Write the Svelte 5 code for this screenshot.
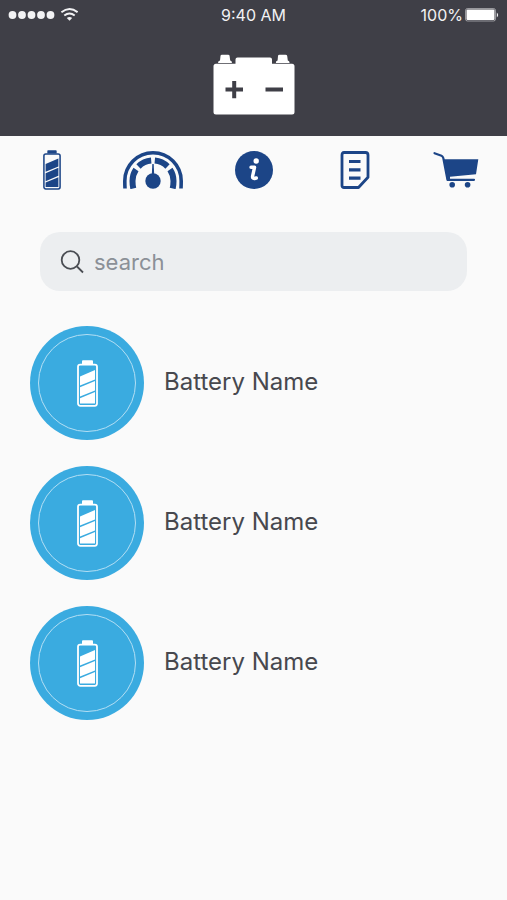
<script lang="ts">
	let query = '';

	const batteries = [
		{ id: 1, name: 'Battery Name' },
		{ id: 2, name: 'Battery Name' },
		{ id: 3, name: 'Battery Name' }
	];

	const links = [
		{ icon: 'battery', label: 'Batteries' },
		{ icon: 'gauge', label: 'Gauge' },
		{ icon: 'info', label: 'Info' },
		{ icon: 'notes', label: 'Notes' },
		{ icon: 'cart', label: 'Cart' }
	];
</script>

{#snippet battery(width: number, height: number)}
	<svg {width} {height} viewBox="0 0 21 47" fill="currentColor" aria-hidden="true">
		<path d="M5 4V1.2Q5 .2 6 .2H15Q16 .2 16 1.2V4Z" />
		<rect x="1" y="4.6" width="19" height="41.2" rx="2.2" fill="none" stroke="currentColor" stroke-width="1.8" />
		<path d="M3 16.4 18 10V19.4L3 25.6ZM3 27.2 18 21V30.4L3 36.6ZM3 38.2 18 32V43.6H3Z" />
	</svg>
{/snippet}

<div class="page">
	<header>
		<div class="status">
			<div class="signal">
				<svg width="70" height="16" viewBox="0 0 70 16" fill="currentColor" aria-hidden="true">
					{#each [4.5, 14, 23.5, 33, 42.5] as cx}
						<circle {cx} cy="8" r="3.9" />
					{/each}
					<g fill="none" stroke="currentColor" stroke-width="1.9">
						<path d="M53.4 5.2Q61.5 -1.4 69.6 5.2" />
						<path d="M56.3 8.6Q61.5 4.2 66.700 8.6" />
					</g>
					<path d="M58.8 11Q61.5 9 64.2 11L61.5 13.8Z" />
				</svg>
			</div>
			<span>9:40 AM</span>
			<div class="power">
				<span>100%</span>
				<svg width="34" height="14" viewBox="0 0 34 14" fill="currentColor" aria-hidden="true">
					<rect x=".5" y=".5" width="30" height="12.500" rx="2" fill="none" stroke="currentColor" opacity=".5" />
					<rect x="1.500" y="1.500" width="28" height="10.500" rx="1" fill="#fff" />
					<path d="M31.800 4.500Q34.500 7 31.800 9.500Z" />
				</svg>
			</div>
		</div>
		<svg class="logo" width="82" height="61" viewBox="0 0 82 61" fill="#fff" role="img" aria-label="Battery">
			<path d="M7.5 2Q7.5 .8 9 .8H15Q16.6 .8 16.6 2L17.2 6.4Q19 6.6 19 9H5Q5 6.6 7 6.4Z" />
			<path d="M65 2Q65 .8 66.5 .8H72.5Q74 .8 74.2 2L74.8 6.4Q76.6 6.6 76.6 9H62.8Q62.8 6.6 64.6 6.4Z" />
			<path d="M3 9.8H22.5V5.5Q22.5 3.5 24.5 3.5H57Q59 3.5 59 5.5V9.8H79Q81.5 9.8 81.5 12.3V58Q81.5 60.5 79 60.5H3Q.5 60.5 .5 58V12.3Q.5 9.8 3 9.8Z" />
			<path d="M12.5 35.5H30M21.2 27V44.3M52.5 35.5H70" stroke="#3f3f47" stroke-width="4" />
		</svg>
	</header>

	<nav>
		{#each links as link}
			<a href="#{link.icon}" aria-label={link.label}>
				{#if link.icon === 'battery'}
					{@render battery(18, 40)}
				{:else if link.icon === 'gauge'}
					<svg width="60" height="38" viewBox="0 0 60 38" fill="none" stroke="currentColor" aria-hidden="true">
						<path d="M2 37.5Q1.8 34 1.8 30A28.2 28.2 0 0 1 58.2 30Q58.200 34 58 37.5" stroke-width="3.6" />
						<g stroke-width="6">
							<path d="M10.3 37.5Q9.5 34 9.5 30A20.5 20.5 0 0 1 13 18.5" />
							<path d="M15.5 15.5A20.5 20.5 0 0 1 28.2 9.6" />
							<path d="M31.8 9.6A20.500 20.500 0 0 1 44.500 15.5" />
							<path d="M47 18.5A20.5 20.5 0 0 1 50.5 30Q50.5 34 49.7 37.5" />
						</g>
						<path d="M29.3 13H30.7L31.2 24H28.8Z" fill="currentColor" stroke="none" />
						<circle cx="30" cy="30" r="7.7" fill="currentColor" stroke="none" />
					</svg>
				{:else if link.icon === 'info'}
					<svg width="38" height="38" viewBox="0 0 38 38" fill="currentColor" aria-hidden="true">
						<circle cx="19" cy="19" r="19" />
						<circle cx="21.2" cy="10" r="2.7" fill="#fff" />
						<path d="M16 16.2H19.600L17.600 25.2Q17.200 27.700 19.500 27.500L21.300 27" fill="none" stroke="#fff" stroke-width="3.4" stroke-linecap="round" stroke-linejoin="round" />
					</svg>
				{:else if link.icon === 'notes'}
					<svg width="30" height="38" viewBox="0 0 30 38" fill="none" stroke="currentColor" stroke-width="2.8" aria-hidden="true">
						<path d="M4 1.5H25.5Q28 1.5 28 4V26.3L18.5 36.5H4Q2 36.5 2 34.5V4Q2 1.5 4 1.5Z" stroke-linejoin="round" />
						<path d="M9 10.500H20.500M9 18.800H20.500M9 27.200H20.500" stroke-width="3.2" />
					</svg>
				{:else}
					<svg width="46" height="38" viewBox="0 0 46 38" fill="currentColor" aria-hidden="true">
						<path d="M1.5 2.2 8.5 4.7Q9.8 5.300 10.3 7L14.5 28.800H41" fill="none" stroke="currentColor" stroke-width="2.2" stroke-linecap="round" stroke-linejoin="round" />
						<path d="M10.5 8.3H45.3L43 23.300 17 25.7V29H14Z" />
						<circle cx="19.2" cy="33.8" r="2.8" />
						<circle cx="34.6" cy="33.8" r="2.8" />
					</svg>
				{/if}
			</a>
		{/each}
	</nav>

	<main>
		<label class="search">
			<svg width="24" height="24" viewBox="0 0 24 24" fill="none" stroke="#4a4d53" stroke-width="1.8" aria-hidden="true">
				<circle cx="10.5" cy="10" r="8.8" />
				<path d="M17 16.5 23 22.5" />
			</svg>
			<input type="text" placeholder="search" aria-label="search" bind:value={query} />
		</label>

		<ul>
			{#each batteries as item (item.id)}
				<li>
					<span class="badge">
						<span class="ring">{@render battery(21, 47)}</span>
					</span>
					<span class="name">{item.name}</span>
				</li>
			{/each}
		</ul>
	</main>
</div>

<style>
	:global(body) {
		margin: 0;
		background: #fafafa;
	}

	.page {
		font-family: Inter, 'Liberation Sans', sans-serif;
		color: #47484e;
	}

	svg {
		display: block;
		flex: none;
	}

	header {
		padding-bottom: 21px;
		background: #3f3f47;
	}

	.status {
		display: grid;
		grid-template-columns: 1fr auto 1fr;
		align-items: center;
		height: 30px;
		padding: 0 8px;
		color: #f2f2f4;
		font-size: 16px;
	}

	.power {
		display: flex;
		justify-content: flex-end;
		align-items: center;
		gap: 2px;
	}

	.logo {
		margin: 24px auto 0;
	}

	nav {
		display: grid;
		grid-template-columns: repeat(5, 1fr);
		height: 68px;
		padding-left: 1px;
		color: #1c4587;
	}

	nav a {
		display: flex;
		align-items: center;
		justify-content: center;
		color: inherit;
	}

	main {
		padding: 28px 40px;
	}

	.search {
		display: flex;
		align-items: center;
		gap: 10px;
		height: 59px;
		padding: 0 20px;
		border-radius: 20px;
		background: #eceef0;
	}

	.search input {
		flex: 1;
		min-width: 0;
		padding: 0;
		border: 0;
		outline: 0;
		background: none;
		color: inherit;
		font: inherit;
		font-size: 22px;
	}

	.search input::placeholder {
		color: #8b9097;
		opacity: 1;
	}

	ul {
		display: flex;
		flex-direction: column;
		gap: 26px;
		margin: 35px -10px 0;
		padding: 0;
		list-style: none;
	}

	li {
		display: flex;
		align-items: center;
		gap: 20px;
	}

	.badge {
		display: flex;
		align-items: center;
		justify-content: center;
		flex: none;
		width: 114px;
		height: 114px;
		border-radius: 50%;
		background: #3aabe0;
	}

	.ring {
		display: flex;
		align-items: center;
		justify-content: center;
		width: 96px;
		height: 96px;
		border: 1px solid #b4dff4;
		border-radius: 50%;
		color: #fff;
	}

	.name {
		padding-bottom: 4px;
		font-size: 24px;
	}
</style>
